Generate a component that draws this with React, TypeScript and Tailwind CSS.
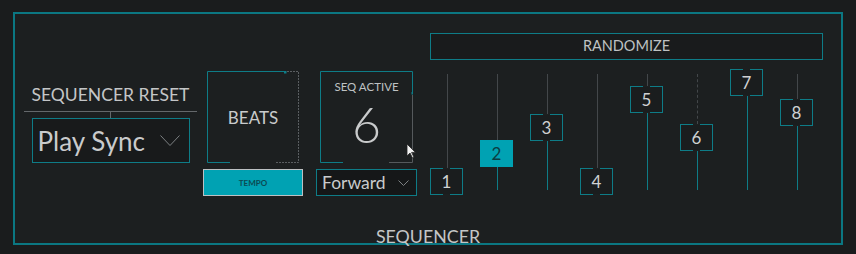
import React from "react";

const TEAL = "#0e7c87";

const sliders = [
  { n: 1, top: 99 },
  { n: 2, top: 71, active: true },
  { n: 3, top: 45 },
  { n: 4, top: 99 },
  { n: 5, top: 17 },
  { n: 6, top: 55, dashed: true },
  { n: 7, top: 0 },
  { n: 8, top: 30 },
];

const Chevron = ({ w, h }: { w: number; h: number }) => (
  <svg width={w} height={h} viewBox={`0 0 ${w} ${h}`} fill="none">
    <polyline
      points={`0.5,0.5 ${w / 2},${h - 0.5} ${w - 0.5},0.5`}
      stroke="#7d8183"
      strokeWidth="1"
    />
  </svg>
);

function BeatsKnob() {
  return (
    <div className="relative ml-[4px] w-[92px] h-[92px] flex items-center justify-center">
      <svg className="absolute inset-0" width="92" height="92" fill="none">
        <path d="M23 91.5 H0.5 V0.5 H78" stroke={TEAL} />
        <rect x="77" y="0" width="2.5" height="2.5" fill={TEAL} />
        <path d="M80 0.5 H91.5 V91.5 H69" stroke="#5a5e61" strokeDasharray="2 1" />
      </svg>
      <span className="text-[17px] text-[#c9cbcc] leading-none">BEATS</span>
    </div>
  );
}

function SeqKnob() {
  return (
    <div className="relative ml-[4px] w-[93px] h-[92px] flex flex-col items-center">
      <svg className="absolute inset-0" width="93" height="92" fill="none">
        <path d="M23 91.5 H0.5 V0.5 H92.5 V22" stroke={TEAL} />
        <rect x="91.5" y="21" width="2.5" height="2.5" fill={TEAL} />
        <path d="M92.5 24 V91.5 H69" stroke="#55595c" />
      </svg>
      <span className="mt-[10px] text-[11.5px] text-[#bfc2c3] leading-none">SEQ ACTIVE</span>
      <span className="mt-[6px] text-[50px] font-light text-[#c9cbcc] leading-none">6</span>
      <svg className="absolute left-[86px] top-[72px]" width="10" height="16" viewBox="0 0 10 16">
        <path d="M1 1 V13 L4 10 L6.5 15 L8 14.3 L5.6 9.4 H9.5 Z" fill="#f2f2f2" stroke="#222" strokeWidth="0.8" />
      </svg>
    </div>
  );
}

function Slider({ n, top, active, dashed }: { n: number; top: number; active?: boolean; dashed?: boolean }) {
  const bottom = top + 27;
  return (
    <div className="relative w-[50px] h-[126px]">
      <div
        className={`absolute left-[25px] w-0 border-l ${dashed ? "border-dashed" : ""} border-[#43474a]`}
        style={{ top: 5, height: Math.max(0, top - 5) }}
      />
      <div
        className="absolute left-[25px] w-px bg-[#0e7c87]"
        style={{ top: bottom, height: Math.max(0, 121 - bottom) }}
      />
      <div
        className={`absolute left-[8px] w-[33px] h-[27px] flex items-center justify-center border ${
          active ? "bg-[#00a2b3] border-[#00a2b3] text-[#0b3d44]" : "bg-[#1a1d1e] border-[#0e7c87] text-[#cfd1d2]"
        }`}
        style={{ top }}
      >
        {!active && (
          <>
            <span className="absolute top-[-1px] left-[12px] w-[7px] h-px bg-[#1c1f20]" />
            <span className="absolute bottom-[-1px] left-[12px] w-[7px] h-px bg-[#1c1f20]" />
          </>
        )}
        <span className="text-[17px] leading-none">{n}</span>
      </div>
    </div>
  );
}

export default function App() {
  return (
    <div className="w-[856px] h-[254px] bg-[#1a1c1d] pt-[12px] pl-[13px] font-['Lato',sans-serif]">
      <div className="w-[830px] h-[233px] border-2 border-[#0b7782] bg-[#1c1f20] flex flex-col">
        <div className="flex items-start">
          {/* sequencer reset */}
          <div className="ml-[9px] mt-[70px] w-[173px] flex flex-col items-center">
            <span className="text-[17.5px] leading-[21px] text-[#c4c6c7]">SEQUENCER RESET</span>
            <div className="mt-[6px] w-full border-t border-[#64686b]" />
            <div className="w-px h-[6px] bg-[#64686b]" />
            <div className="w-[158px] h-[45px] border border-[#0e7c87] bg-[#181a1b] flex items-center justify-between pl-[5px] pr-[9px]">
              <span className="text-[26px] leading-none text-[#c9cbcc]">Play Sync</span>
              <Chevron w={20} h={11} />
            </div>
          </div>

          {/* beats */}
          <div className="ml-[6px] mt-[57px] w-[100px] flex flex-col">
            <BeatsKnob />
            <button className="mt-[6px] h-[27px] w-full bg-[#00a2b3] border border-[#bcc0c2] text-[8px] font-bold text-[#0c4a52] leading-none">
              TEMPO
            </button>
          </div>

          {/* seq active */}
          <div className="ml-[13px] mt-[57px] w-[101px] flex flex-col">
            <SeqKnob />
            <div className="mt-[6px] h-[27px] w-full border border-[#0e7c87] bg-[#151718] flex items-center justify-between pl-[5px] pr-[7px]">
              <span className="text-[17.5px] leading-none text-[#c9cbcc]">Forward</span>
              <Chevron w={11} h={6} />
            </div>
          </div>

          {/* randomize + sliders */}
          <div className="ml-[5px] mt-[19px] w-[401px] flex flex-col">
            <button className="ml-[8px] w-[393px] h-[27px] border border-[#0e7c87] bg-[#191b1c] text-[14.5px] leading-none text-[#bfc2c3]">
              RANDOMIZE
            </button>
            <div className="mt-[9px] flex">
              {sliders.map((s) => (
                <Slider key={s.n} {...s} />
              ))}
            </div>
          </div>
        </div>

        <div className="mt-auto -mb-[2px] text-center text-[17.8px] leading-[18px] text-[#c4c6c7]">
          SEQUENCER
        </div>
      </div>
    </div>
  );
}
